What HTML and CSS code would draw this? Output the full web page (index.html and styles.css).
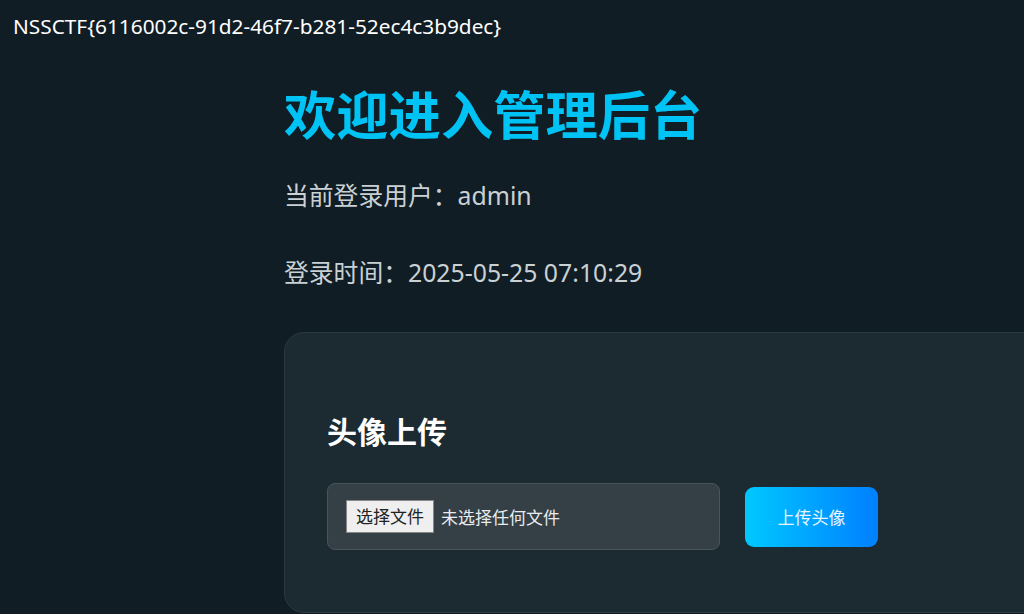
FILE: index.html
```html
<!DOCTYPE html>
<html lang="zh-CN">
<head>
<meta charset="UTF-8">
<meta name="viewport" content="width=device-width, initial-scale=1.0">
<title>管理后台</title>
<link rel="stylesheet" href="styles.css">
</head>
<body>

<div class="flag">NSSCTF{6116002c-91d2-46f7-b281-52ec4c3b9dec}</div>

<div id="admin-container">
    <h1>欢迎进入管理后台</h1>
    <p class="info">当前登录用户：admin</p>
    <p class="info">登录时间：2025-05-25 07:10:29</p>

    <div class="upload-card">
        <h2>头像上传</h2>
        <form class="upload-form">
            <div class="file-box">
                <span class="file-btn">选择文件</span>
                <span class="file-name">未选择任何文件</span>
            </div>
            <button type="button" class="upload-btn">上传头像</button>
        </form>
    </div>
</div>

</body>
</html>
```

FILE: styles.css
```css
html, body {
    overflow: hidden;
}

body {
    font-family: "Noto Sans", "Noto Sans CJK SC", sans-serif;
    margin: 0;
    padding: 0;
    background-color: #111d24; /* Dark navy */
    color: #c9d1d5;
    height: 614px;
}

.flag {
    padding: 12px 13px 0;
    font-size: 20.8px;
    color: #fff;
    line-height: 28px;
}

#admin-container {
    margin-left: 284px;
    width: 800px;
}

h1 {
    margin: 43px 0 0;
    font-size: 52.3px;
    line-height: 64px;
    font-weight: 700;
    color: #00c3f5;
}

.info {
    margin: 0;
    font-size: 24.8px;
    line-height: 34px;
    color: #c9d1d5;
}

h1 + .info {
    margin-top: 31px;
}

.info + .info {
    margin-top: 43px;
}

.upload-card {
    margin-top: 43px;
    height: 281px;
    background-color: #1c2a31;
    border: 1px solid #2b3940;
    border-radius: 20px;
    padding: 78px 42px 0;
    box-sizing: border-box;
}

h2 {
    margin: 0;
    font-size: 30px;
    line-height: 42px;
    font-weight: 700;
    color: #fff;
}

.upload-form {
    margin-top: 30px;
    display: flex;
    align-items: center;
    gap: 25px;
}

.file-box {
    width: 393px;
    height: 67px;
    box-sizing: border-box;
    background-color: #343f46;
    border: 1px solid #4a555b;
    border-radius: 8px;
    padding: 0 18px;
    display: flex;
    align-items: center;
    gap: 7px;
    font-size: 17px;
}

.file-btn {
    background-color: #efefef;
    color: #222;
    border: 1px solid #888;
    padding: 3px 9px;
    line-height: 25px;
}

.file-name {
    color: #e8ecee;
}

.upload-btn {
    width: 133px;
    height: 60px;
    border: none;
    border-radius: 9px;
    background: linear-gradient(90deg, #00c8ff, #0080ff);
    color: #e8f4ff;
    font-family: inherit;
    font-size: 17px;
    cursor: pointer;
}
```
